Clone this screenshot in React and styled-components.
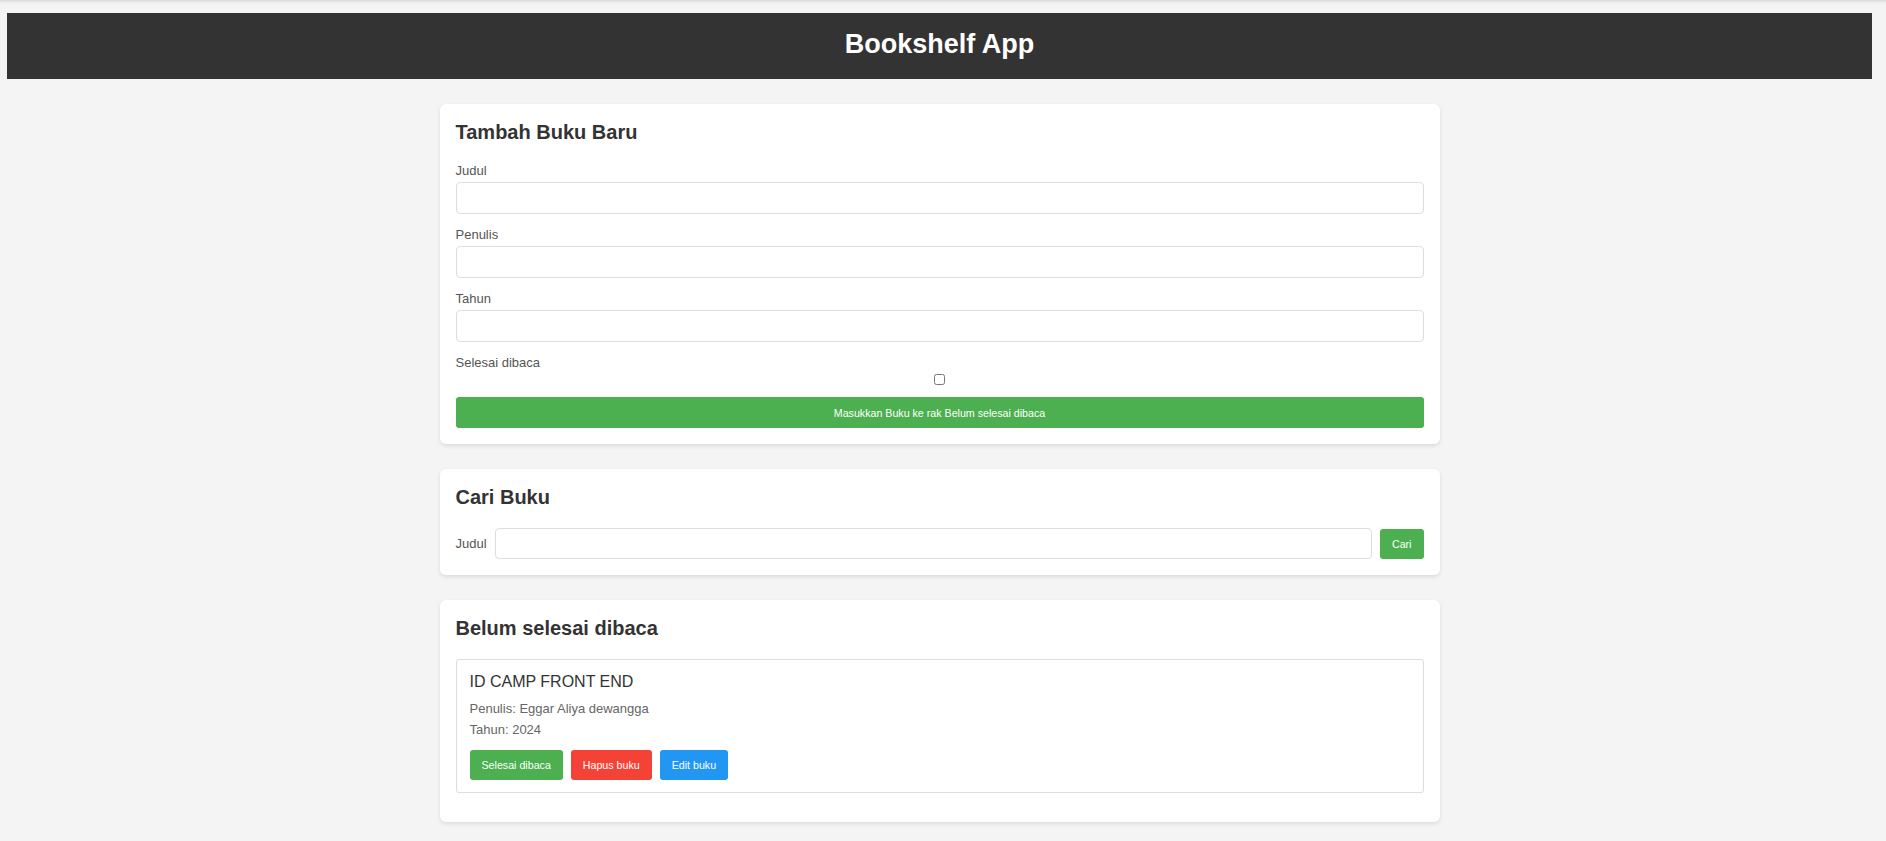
import styled, { createGlobalStyle } from 'styled-components'

const GlobalStyle = createGlobalStyle`
  body {
    margin: 0;
    background: #f4f4f4;
    font-family: 'Liberation Sans', Arial, sans-serif;
    color: #333;
  }
  * { box-sizing: border-box; }
`

const books = [
  { id: 1, title: 'ID CAMP FRONT END', author: 'Eggar Aliya dewangga', year: 2024 },
]

export default function App() {
  return (
    <>
      <GlobalStyle />
      <Page>
        <Header>
          <h1>Bookshelf App</h1>
        </Header>
        <Main>
          <Card>
            <CardTitle>Tambah Buku Baru</CardTitle>
            <Field>
              <Label>Judul</Label>
              <TextInput type="text" />
            </Field>
            <Field>
              <Label>Penulis</Label>
              <TextInput type="text" />
            </Field>
            <Field>
              <Label>Tahun</Label>
              <TextInput type="number" />
            </Field>
            <CheckField>
              <Label>Selesai dibaca</Label>
              <Checkbox type="checkbox" />
            </CheckField>
            <SubmitButton>Masukkan Buku ke rak Belum selesai dibaca</SubmitButton>
          </Card>

          <Card>
            <CardTitle>Cari Buku</CardTitle>
            <SearchRow>
              <SearchLabel>Judul</SearchLabel>
              <SearchInput type="text" />
              <ActionButton color="#4CAF50">Cari</ActionButton>
            </SearchRow>
          </Card>

          <Card>
            <CardTitle>Belum selesai dibaca</CardTitle>
            <BookList>
              {books.map((b) => (
                <BookItem key={b.id}>
                  <BookTitle>{b.title}</BookTitle>
                  <Meta>Penulis: {b.author}</Meta>
                  <Meta>Tahun: {b.year}</Meta>
                  <Actions>
                    <ActionButton color="#4CAF50">Selesai dibaca</ActionButton>
                    <ActionButton color="#f44336">Hapus buku</ActionButton>
                    <ActionButton color="#2196F3">Edit buku</ActionButton>
                  </Actions>
                </BookItem>
              ))}
            </BookList>
          </Card>
        </Main>
      </Page>
    </>
  )
}

const Page = styled.div`
  min-height: 100vh;
  padding: 13px 14px 25px 7px;
  background: linear-gradient(to bottom, #d6d6d6 0, #ececec 2px, #f4f4f4 5px) no-repeat;
  background-color: #f4f4f4;
`

const Header = styled.header`
  background: #333;
  color: #fff;
  text-align: center;
  padding: 16px 0 19px;
  margin-bottom: 25px;
  h1 {
    margin: 0;
    font-size: 27px;
    line-height: 31px;
    font-weight: bold;
  }
`

const Main = styled.main`
  width: 1000px;
  margin: 0 auto;
  display: flex;
  flex-direction: column;
  gap: 25px;
`

const Card = styled.section`
  background: #fff;
  border-radius: 6px;
  box-shadow: 0 2px 4px rgba(0, 0, 0, 0.1);
  padding: 16px;
`

const CardTitle = styled.h2`
  margin: 0 0 19px;
  font-size: 20px;
  line-height: 24px;
  font-weight: bold;
  color: #333;
`

const Field = styled.div`
  margin-bottom: 13px;
`

const CheckField = styled.div`
  margin-bottom: 12px;
`

const Label = styled.label`
  display: block;
  font-size: 13px;
  line-height: 16px;
  color: #555;
  margin-bottom: 3px;
`

const TextInput = styled.input`
  display: block;
  width: 100%;
  height: 32px;
  padding: 0 8px;
  border: 1px solid #ddd;
  border-radius: 4px;
  font-family: inherit;
  font-size: 13px;
  background: #fff;
`

const Checkbox = styled.input`
  display: block;
  width: 11px;
  height: 11px;
  margin: 0 auto;
`

const SubmitButton = styled.button`
  display: block;
  width: 100%;
  height: 31px;
  border: none;
  border-radius: 3px;
  background: #4CAF50;
  color: #fff;
  font-family: inherit;
  font-size: 10.67px;
  cursor: pointer;
`

const SearchRow = styled.div`
  display: flex;
  align-items: center;
  gap: 8px;
`

const SearchLabel = styled.label`
  font-size: 13px;
  color: #555;
`

const SearchInput = styled(TextInput)`
  flex: 1;
  height: 31px;
`

const ActionButton = styled.button`
  height: 30px;
  padding: 0 12px;
  border: none;
  border-radius: 3px;
  background: ${(p) => p.color};
  color: #fff;
  font-family: inherit;
  font-size: 10.67px;
  cursor: pointer;
`

const BookList = styled.div`
  margin-top: 2px;
`

const BookItem = styled.article`
  border: 1px solid #ddd;
  border-radius: 3px;
  padding: 13px 13px 12px;
  margin-bottom: 13px;
`

const BookTitle = styled.h3`
  margin: 0 0 10px;
  font-size: 16px;
  line-height: 18px;
  font-weight: normal;
  color: #333;
`

const Meta = styled.p`
  margin: 0 0 6px;
  font-size: 13px;
  line-height: 15px;
  color: #666;
`

const Actions = styled.div`
  display: flex;
  gap: 8px;
  margin-top: 13px;
`
